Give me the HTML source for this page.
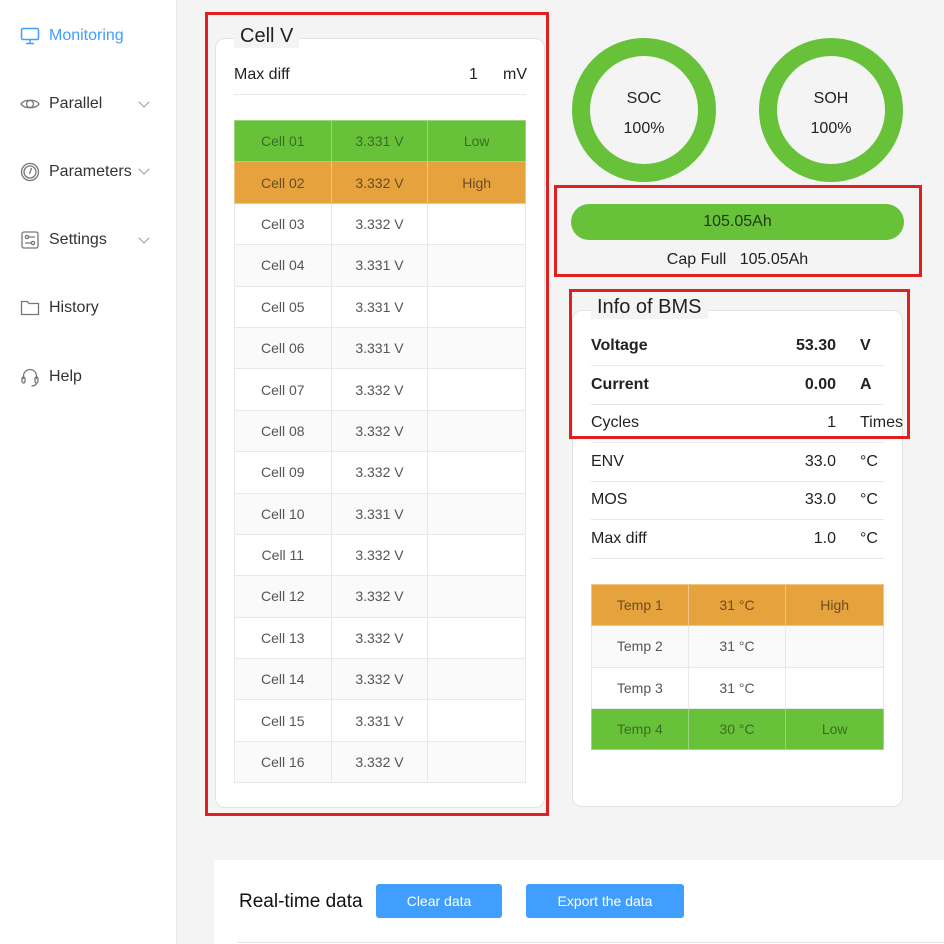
<!DOCTYPE html>
<html><head><meta charset="utf-8"><style>
*{margin:0;padding:0;box-sizing:border-box}
body{width:944px;height:944px;overflow:hidden;background:#f4f4f5;font-family:"Liberation Sans",Arial,sans-serif;position:relative;color:#222}
.a{position:absolute}
#side{left:0;top:0;width:177px;height:944px;background:#fff;border-right:1px solid #e8e8e8}
.nav{position:absolute;left:20px;font-size:16px;color:#333;display:flex;align-items:center}
.nav svg{width:20px;height:20px;margin-right:9px}
.chev{position:absolute;left:140px;width:8px;height:8px;border-right:1px solid #999;border-bottom:1px solid #999;transform:rotate(45deg)}
.card{background:#fff;border:1px solid #e3e3e3;border-radius:10px}
.ttl{position:absolute;background:#f4f4f5;font-size:20px;color:#222;padding:0 6px;line-height:24px}
.red{position:absolute;border:3px solid #e0201e}
table{border-collapse:collapse;position:absolute}
td{border:1px solid #e8e8e8;text-align:center;font-size:14px;color:#555;padding:0}
.g td{background:#67c23a;color:#3d6b2a;border-color:#9bd67e}
.o td{background:#e6a23c;color:#6b4d22;border-color:#f0c585}
.s td{background:#fafafa}
.ring{position:absolute;width:144px;height:144px;border-radius:50%;border:18px solid #67c23a;text-align:center;font-size:16px;color:#222}
.row{position:absolute;left:591px;width:293px;height:39px;border-bottom:1px solid #e8e8e8;font-size:16px}
.row span{position:absolute;top:10px}
.btn{position:absolute;top:884px;height:34px;background:#409eff;border-radius:3px;color:#fff;font-size:14px;text-align:center;line-height:34px}
</style></head><body>
<div id="side" class="a"></div>
<div class="nav" style="top:26px;color:#409eff"><svg viewBox="0 0 20 20" fill="none" stroke="#409eff" stroke-width="1.5"><rect x="1.5" y="2.5" width="17" height="11" rx="1.5"/><path d="M10 13.5v4M6 17.5h8"/></svg>Monitoring</div>
<div class="nav" style="top:94px"><svg viewBox="0 0 20 20" fill="none" stroke="#777" stroke-width="1.3"><path d="M1 10c3-5 15-5 18 0c-3 5-15 5-18 0z"/><circle cx="10" cy="10" r="3.5"/></svg>Parallel</div><div class="chev" style="top:98px"></div>
<div class="nav" style="top:162px"><svg viewBox="0 0 20 20" fill="none" stroke="#777" stroke-width="1.3"><circle cx="10" cy="10" r="8.5"/><circle cx="10" cy="10" r="6"/><path d="M11.5 6l-2 6"/></svg>Parameters</div><div class="chev" style="top:165px"></div>
<div class="nav" style="top:230px"><svg viewBox="0 0 20 20" fill="none" stroke="#777" stroke-width="1.3"><rect x="2" y="2" width="16" height="16" rx="2"/><path d="M5 7h10M5 13h10"/><circle cx="7" cy="7" r="1.6" fill="#fff"/><circle cx="13" cy="13" r="1.6" fill="#fff"/></svg>Settings</div><div class="chev" style="top:234px"></div>
<div class="nav" style="top:298px"><svg viewBox="0 0 20 20" fill="none" stroke="#777" stroke-width="1.3"><path d="M1.5 3.5h6l1.5 2h9.5v11h-17z"/></svg>History</div>
<div class="nav" style="top:367px"><svg viewBox="0 0 20 20" fill="none" stroke="#777" stroke-width="1.3"><path d="M3.5 12v-3a6.5 6.5 0 0 1 13 0v3"/><rect x="2" y="10" width="3" height="6" rx="1.5"/><rect x="15" y="10" width="3" height="6" rx="1.5"/><path d="M16.5 16c0 2-3 3-5 3"/></svg>Help</div>

<div class="card a" style="left:215px;top:38px;width:330px;height:770px"></div>
<div class="ttl" style="left:234px;top:24px">Cell V</div>
<div class="a" style="left:234px;top:66px;font-size:16px">Max diff</div>
<div class="a" style="left:469px;top:66px;font-size:16px">1</div>
<div class="a" style="left:503px;top:66px;font-size:16px">mV</div>
<div class="a" style="left:234px;top:94px;width:292px;border-top:1px solid #e8e8e8"></div>
<table style="left:234px;top:120px;width:292px">
<colgroup><col style="width:97px"><col style="width:97px"><col style="width:98px"></colgroup>
<tr class="g" style="height:41.4px"><td>Cell 01</td><td>3.331 V</td><td>Low</td></tr>
<tr class="o" style="height:41.4px"><td>Cell 02</td><td>3.332 V</td><td>High</td></tr>
<tr style="height:41.4px"><td>Cell 03</td><td>3.332 V</td><td></td></tr>
<tr class="s" style="height:41.4px"><td>Cell 04</td><td>3.331 V</td><td></td></tr>
<tr style="height:41.4px"><td>Cell 05</td><td>3.331 V</td><td></td></tr>
<tr class="s" style="height:41.4px"><td>Cell 06</td><td>3.331 V</td><td></td></tr>
<tr style="height:41.4px"><td>Cell 07</td><td>3.332 V</td><td></td></tr>
<tr class="s" style="height:41.4px"><td>Cell 08</td><td>3.332 V</td><td></td></tr>
<tr style="height:41.4px"><td>Cell 09</td><td>3.332 V</td><td></td></tr>
<tr class="s" style="height:41.4px"><td>Cell 10</td><td>3.331 V</td><td></td></tr>
<tr style="height:41.4px"><td>Cell 11</td><td>3.332 V</td><td></td></tr>
<tr class="s" style="height:41.4px"><td>Cell 12</td><td>3.332 V</td><td></td></tr>
<tr style="height:41.4px"><td>Cell 13</td><td>3.332 V</td><td></td></tr>
<tr class="s" style="height:41.4px"><td>Cell 14</td><td>3.332 V</td><td></td></tr>
<tr style="height:41.4px"><td>Cell 15</td><td>3.331 V</td><td></td></tr>
<tr class="s" style="height:41.4px"><td>Cell 16</td><td>3.332 V</td><td></td></tr>
</table>
<div class="red" style="left:205px;top:12px;width:344px;height:804px"></div>

<div class="ring" style="left:572px;top:38px"><div style="margin-top:34px">SOC</div><div style="margin-top:12px">100%</div></div>
<div class="ring" style="left:759px;top:38px"><div style="margin-top:34px">SOH</div><div style="margin-top:12px">100%</div></div>
<div class="a" style="left:571px;top:204px;width:333px;height:36px;border-radius:18px;background:#67c23a;text-align:center;line-height:36px;font-size:16px;color:#1f3a14">105.05Ah</div>
<div class="a" style="left:571px;top:251px;width:333px;text-align:center;font-size:16px">Cap Full&nbsp;&nbsp; 105.05Ah</div>
<div class="red" style="left:554px;top:185px;width:368px;height:92px"></div>

<div class="card a" style="left:572px;top:310px;width:331px;height:497px"></div>
<div class="ttl" style="left:591px;top:295px">Info of BMS</div>
<div class="row" style="top:327px;font-weight:bold"><span style="left:0">Voltage</span><span style="right:48px">53.30</span><span style="left:269px">V</span></div>
<div class="row" style="top:366px;font-weight:bold"><span style="left:0">Current</span><span style="right:48px">0.00</span><span style="left:269px">A</span></div>
<div class="row" style="top:404px"><span style="left:0">Cycles</span><span style="right:48px">1</span><span style="left:269px">Times</span></div>
<div class="row" style="top:443px"><span style="left:0">ENV</span><span style="right:48px">33.0</span><span style="left:269px">°C</span></div>
<div class="row" style="top:481px"><span style="left:0">MOS</span><span style="right:48px">33.0</span><span style="left:269px">°C</span></div>
<div class="row" style="top:520px"><span style="left:0">Max diff</span><span style="right:48px">1.0</span><span style="left:269px">°C</span></div>
<table style="left:591px;top:584px;width:293px">
<colgroup><col style="width:97px"><col style="width:98px"><col style="width:98px"></colgroup>
<tr class="o" style="height:41.3px"><td>Temp 1</td><td>31 °C</td><td>High</td></tr>
<tr class="s" style="height:41.3px"><td>Temp 2</td><td>31 °C</td><td></td></tr>
<tr style="height:41.3px"><td>Temp 3</td><td>31 °C</td><td></td></tr>
<tr class="g" style="height:41.3px"><td>Temp 4</td><td>30 °C</td><td>Low</td></tr>
</table>
<div class="red" style="left:569px;top:289px;width:341px;height:150px"></div>

<div class="a" style="left:214px;top:860px;width:730px;height:84px;background:#fff"></div>
<div class="a" style="left:239px;top:891px;font-size:19px;color:#111">Real-time data</div>
<div class="btn" style="left:376px;width:126px">Clear data</div>
<div class="btn" style="left:526px;width:158px">Export the data</div>
<div class="a" style="left:237px;top:942px;width:707px;border-top:1px solid #e4e4e4"></div>
</body></html>
